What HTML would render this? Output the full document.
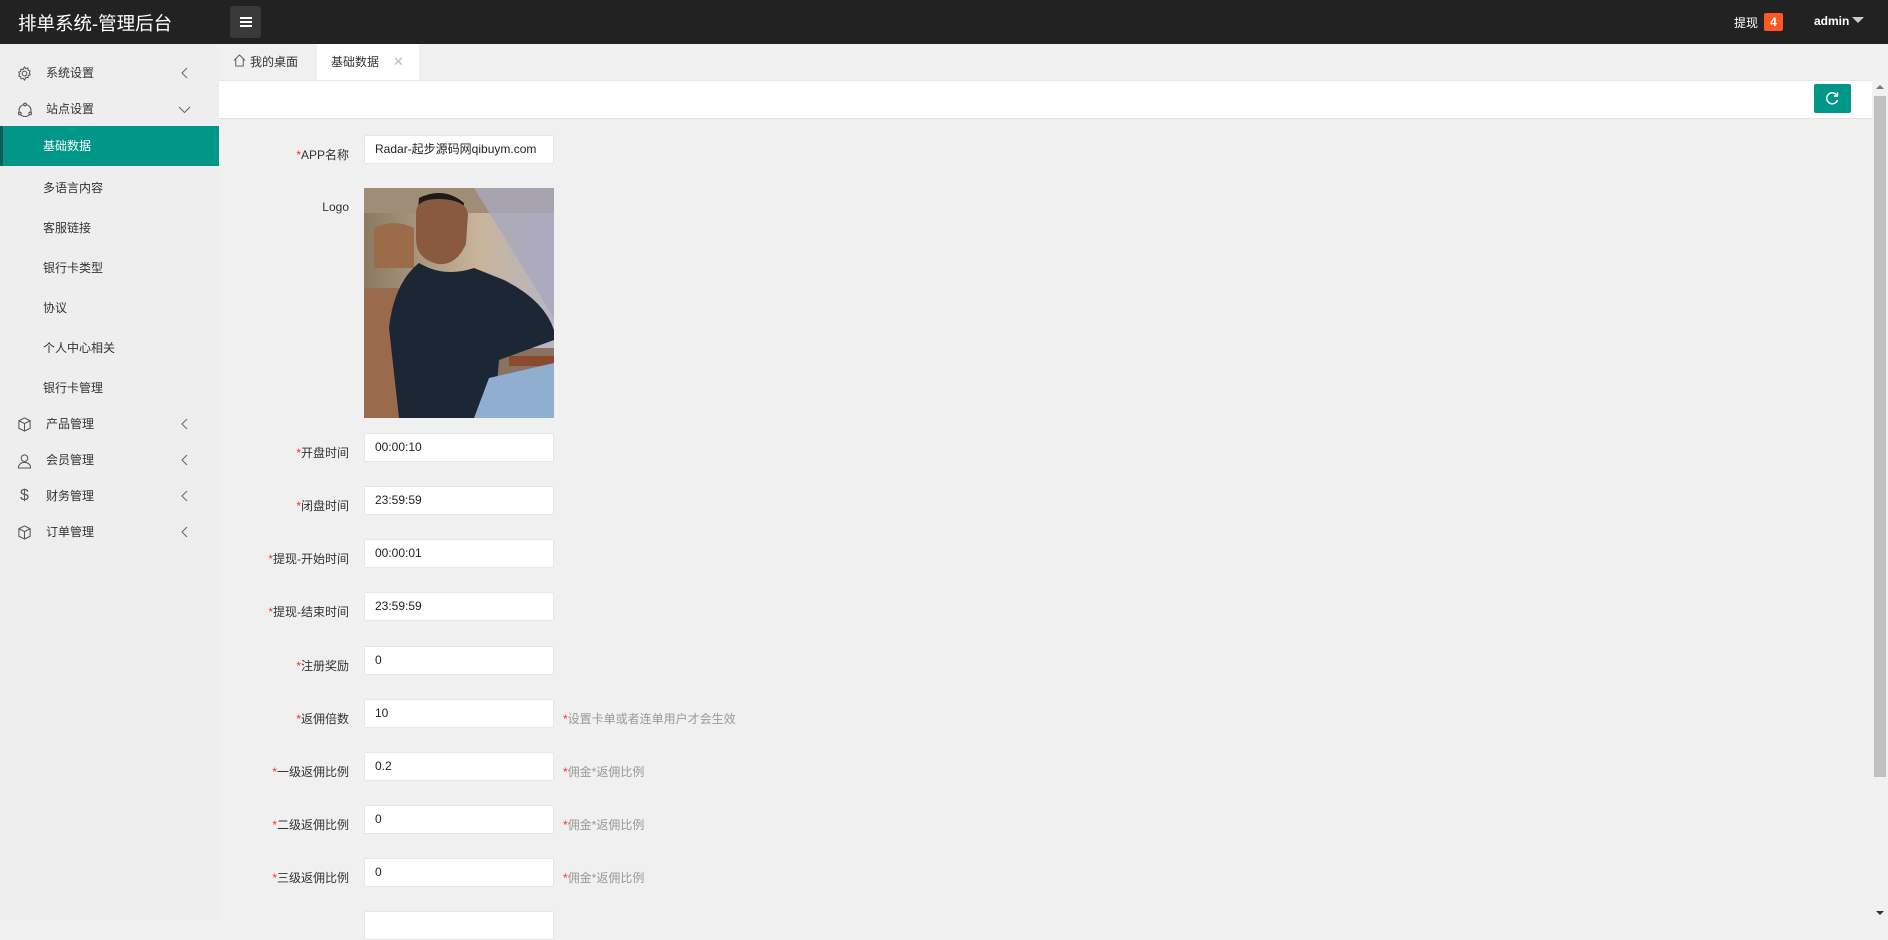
<!DOCTYPE html>
<html><head><meta charset="utf-8">
<style>
*{margin:0;padding:0;box-sizing:border-box}
body{width:1888px;height:919px;overflow:hidden;background:#f0f0f0;font-family:"Liberation Sans","Noto Sans CJK SC",sans-serif;font-size:12px;color:#333;position:relative}
.hd{position:absolute;left:0;top:0;width:1888px;height:44px;background:#222}
.logo{position:absolute;left:18px;top:10px;color:#fff;font-size:18.5px}
.mbtn{position:absolute;left:230px;top:6px;width:31px;height:32px;background:#393939;border-radius:3px}
.mbtn i{position:absolute;left:10px;width:12px;height:1.5px;background:#fff}
.side{position:absolute;left:0;top:44px;width:219px;height:875px;background:#eee}
.it{position:absolute;left:0;width:219px;height:36px;line-height:36px;color:#333}
.it .t{position:absolute;left:46px}
.it svg{position:absolute;left:17px;top:11px}
.it .ar{position:absolute;left:180px;top:12px}
.sub{position:absolute;left:43px;color:#333}
.act{position:absolute;left:0;top:82px;width:219px;height:40px;background:#009688;border-left:3px solid #0a5f55;color:#fff;line-height:40px;padding-left:40px}
.tabs{position:absolute;left:219px;top:44px;width:1653px;height:36px}
.tab1{position:absolute;left:14px;top:0;height:36px;line-height:36px}
.tab2{position:absolute;left:98px;top:0;width:102px;height:37px;background:#fff;line-height:36px;padding-left:14px}
.tb{position:absolute;left:219px;top:80px;width:1653px;height:39px;background:#fff;border-bottom:1px solid #e2e2e2;border-top:1px solid #e6e6e6}
.rf{position:absolute;left:1595px;top:3px;width:37px;height:29px;background:#009688;border-radius:2px}
.sb{position:absolute;left:1872px;top:80px;width:16px;height:839px;background:#f1f1f1}
.th{position:absolute;left:2px;top:16px;width:12px;height:681px;background:#c1c1c1}
.lb{position:absolute;right:1539px;text-align:right;color:#333;white-space:nowrap}
.lb b,.hn b{color:#ff3030;font-weight:normal}
.in{position:absolute;left:364px;width:190px;height:29px;background:#fff;border:1px solid #e6e6e6;border-radius:2px;padding-left:10px;line-height:27px;color:#222}
.hn{position:absolute;left:563px;color:#999}
</style></head><body>
<div class="hd">
<div class="logo">排单系统-管理后台</div>
<div class="mbtn"><i style="top:11px"></i><i style="top:15px"></i><i style="top:19px"></i></div>
<div style="position:absolute;left:1734px;top:14px;color:#fff">提现</div>
<div style="position:absolute;left:1764px;top:13px;width:19px;height:18px;background:#ff5722;border-radius:2px;color:#fff;font-size:12px;font-weight:bold;text-align:center;line-height:18px">4</div>
<div style="position:absolute;left:1814px;top:14px;color:#fff;font-weight:bold">admin</div>
<div style="position:absolute;left:1852px;top:17px;width:0;height:0;border-left:6px solid transparent;border-right:6px solid transparent;border-top:6px solid #ccc"></div>
</div>
<div class="side">
<div class="it" style="top:11px"><svg width="15" height="15" viewBox="0 0 16 16" fill="none" stroke="#555" stroke-width="1.1"><circle cx="8" cy="8" r="2.5"/><path d="M8 1l1.3 1.8 2.2-.6.4 2.2 2.1.9-.9 2.1 1 1.9-2.1 1-.3 2.2-2.2-.5L8 15l-1.4-1.9-2.2.6-.4-2.2-2.1-.9.9-2.1-1-1.9 2.1-1 .3-2.2 2.2.5z"/></svg><span class="t">系统设置</span><svg class="ar" style="left:180px;top:12px" width="8" height="12"><path d="M7 1L2 6l5 5" stroke="#666" fill="none"/></svg></div>
<div class="it" style="top:47px"><svg width="16" height="16" viewBox="0 0 16 16" fill="none" stroke="#555" stroke-width="1.1"><circle cx="8" cy="8.5" r="6"/><circle cx="8" cy="2.5" r="1.3" fill="#eee"/><circle cx="2.8" cy="11.5" r="1.3" fill="#eee"/><circle cx="13.2" cy="11.5" r="1.3" fill="#eee"/></svg><span class="t">站点设置</span><svg class="ar" style="left:178px;top:15px" width="13" height="8"><path d="M1 1l5.5 5.5L12 1" stroke="#666" fill="none"/></svg></div>
<div class="act">基础数据</div>
<div class="sub" style="top:135px">多语言内容</div>
<div class="sub" style="top:175px">客服链接</div>
<div class="sub" style="top:215px">银行卡类型</div>
<div class="sub" style="top:255px">协议</div>
<div class="sub" style="top:295px">个人中心相关</div>
<div class="sub" style="top:335px">银行卡管理</div>
<div class="it" style="top:362px"><svg width="15" height="15" viewBox="0 0 16 16" fill="none" stroke="#555" stroke-width="1.1"><path d="M8 1l6 3v8l-6 3-6-3V4zM2 4l6 3 6-3M8 7v8"/></svg><span class="t">产品管理</span><svg class="ar" width="8" height="12"><path d="M7 1L2 6l5 5" stroke="#666" fill="none"/></svg></div>
<div class="it" style="top:398px"><svg width="15" height="16" viewBox="0 0 16 16" fill="none" stroke="#555" stroke-width="1.1"><circle cx="8" cy="5" r="3.5"/><path d="M1.5 15.5c0-4 3-6 6.5-6s6.5 2 6.5 6z"/></svg><span class="t">会员管理</span><svg class="ar" width="8" height="12"><path d="M7 1L2 6l5 5" stroke="#666" fill="none"/></svg></div>
<div class="it" style="top:434px"><span style="position:absolute;left:20px;color:#555;font-size:16px">$</span><span class="t">财务管理</span><svg class="ar" width="8" height="12"><path d="M7 1L2 6l5 5" stroke="#666" fill="none"/></svg></div>
<div class="it" style="top:470px"><svg width="15" height="15" viewBox="0 0 16 16" fill="none" stroke="#555" stroke-width="1.1"><path d="M8 1l6 3v8l-6 3-6-3V4zM2 4l6 3 6-3M8 7v8"/></svg><span class="t">订单管理</span><svg class="ar" width="8" height="12"><path d="M7 1L2 6l5 5" stroke="#666" fill="none"/></svg></div>
</div>
<div class="tabs">
<div class="tab1"><svg width="13" height="13" viewBox="0 0 14 14" style="vertical-align:-1px;margin-right:4px" fill="none" stroke="#555"><path d="M1 7L7 1l6 6M3 5.5V13h8V5.5"/></svg>我的桌面</div>
<div class="tab2">基础数据<span style="color:#bbb;margin-left:14px;font-size:13px">✕</span></div>
</div>
<div class="tb"><div class="rf"><svg width="37" height="29" viewBox="0 0 37 29" fill="none" stroke="#fff" stroke-width="1.5"><path d="M23 11.5A5.5 5.5 0 1 0 23.5 16"/><path d="M23.5 8.5v3.5H20"/></svg></div></div>
<div class="sb"><div style="position:absolute;left:4px;top:5px;border-left:4px solid transparent;border-right:4px solid transparent;border-bottom:4px solid #777"></div><div class="th"></div><div style="position:absolute;left:4px;bottom:4px;border-left:4px solid transparent;border-right:4px solid transparent;border-top:4px solid #333"></div></div>

<div class="lb" style="top:146px"><b>*</b>APP名称</div><div class="in" style="top:135px">Radar-起步源码网qibuym.com</div>
<div class="lb" style="top:200px">Logo</div>
<svg style="position:absolute;left:364px;top:188px" width="190" height="230" viewBox="0 0 190 230">
<defs><linearGradient id="bg" x1="0" y1="0" x2="1" y2="0"><stop offset="0" stop-color="#8a7a62"/><stop offset=".6" stop-color="#c7b49a"/><stop offset="1" stop-color="#b8b6c4"/></linearGradient></defs>
<rect width="190" height="230" fill="url(#bg)"/>
<rect width="190" height="25" fill="#a08d78"/>
<path d="M110 0L190 0 190 130z" fill="#a9a9bd" opacity=".8"/>
<path d="M0 100h40v130H0z" fill="#9a6a4c"/>
<path d="M10 40q20-10 40 0v40H10z" fill="#9b6b4a"/>
<rect x="130" y="160" width="60" height="30" fill="#8a7262"/>
<rect x="145" y="168" width="45" height="10" fill="#8a4a2e"/>
<path d="M55 10q25-12 45 5l-2 20-45 2z" fill="#1f1a18"/>
<path d="M52 25q0-15 25-14t27 15l-2 30q-10 22-28 20-22-5-22-25z" fill="#8a5a40"/>
<path d="M55 75q25 15 55 5l30 12q40 20 50 50v10l-55 20-5 58H35l-10-90q5-45 30-65z" fill="#1c2634"/>
<path d="M125 190l65-15v55h-80z" fill="#8faed0"/>
</svg>
<div class="lb" style="top:444px"><b>*</b>开盘时间</div><div class="in" style="top:433px">00:00:10</div>
<div class="lb" style="top:497px"><b>*</b>闭盘时间</div><div class="in" style="top:486px">23:59:59</div>
<div class="lb" style="top:550px"><b>*</b>提现-开始时间</div><div class="in" style="top:539px">00:00:01</div>
<div class="lb" style="top:603px"><b>*</b>提现-结束时间</div><div class="in" style="top:592px">23:59:59</div>
<div class="lb" style="top:657px"><b>*</b>注册奖励</div><div class="in" style="top:646px">0</div>
<div class="lb" style="top:710px"><b>*</b>返佣倍数</div><div class="in" style="top:699px">10</div><div class="hn" style="top:710px"><b>*</b>设置卡单或者连单用户才会生效</div>
<div class="lb" style="top:763px"><b>*</b>一级返佣比例</div><div class="in" style="top:752px">0.2</div><div class="hn" style="top:763px"><b>*</b>佣金*返佣比例</div>
<div class="lb" style="top:816px"><b>*</b>二级返佣比例</div><div class="in" style="top:805px">0</div><div class="hn" style="top:816px"><b>*</b>佣金*返佣比例</div>
<div class="lb" style="top:869px"><b>*</b>三级返佣比例</div><div class="in" style="top:858px">0</div><div class="hn" style="top:869px"><b>*</b>佣金*返佣比例</div>
<div class="in" style="top:911px"></div>
</body></html>
